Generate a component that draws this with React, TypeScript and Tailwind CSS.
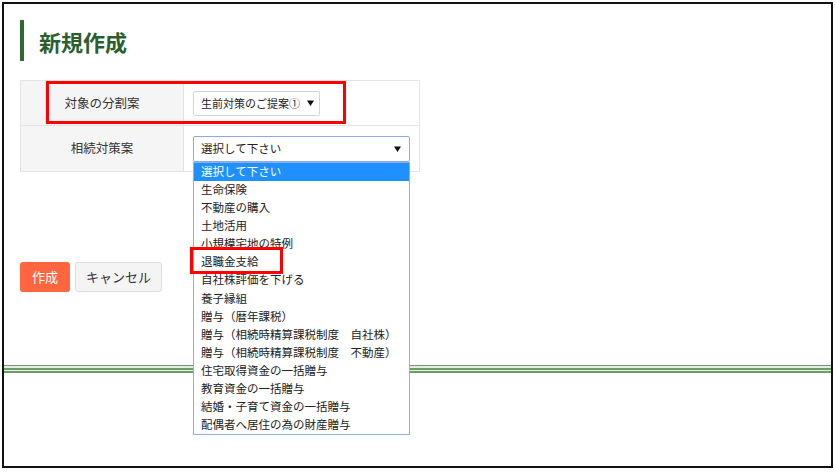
import React from "react";

const options = [
  "選択して下さい",
  "生命保険",
  "不動産の購入",
  "土地活用",
  "小規模宅地の特例",
  "退職金支給",
  "自社株評価を下げる",
  "養子縁組",
  "贈与（暦年課税）",
  "贈与（相続時精算課税制度　自社株）",
  "贈与（相続時精算課税制度　不動産）",
  "住宅取得資金の一括贈与",
  "教育資金の一括贈与",
  "結婚・子育て資金の一括贈与",
  "配偶者へ居住の為の財産贈与",
];

function Arrow() {
  return (
    <svg width="7" height="6" viewBox="0 0 7 6" className="shrink-0">
      <path d="M0 0.5 L7 0.5 L3.5 6 Z" fill="#111" />
    </svg>
  );
}

export default function App() {
  return (
    <div
      className="relative w-[836px] h-[472px] bg-white pt-[2px] pl-[2px] text-[#333]"
      style={{ fontFamily: '"Noto Sans CJK JP", "Noto Sans", sans-serif' }}
    >
      <div className="w-[831px] h-[466px] border-2 border-[#111] flex flex-col">
        <div className="pl-[16px] pt-[16px] flex flex-col">
          <div className="h-[41px] border-l-4 border-[#2e6b33] pl-[15px] flex items-center text-[22px] font-bold text-[#2c5e2e] leading-none">
            新規作成
          </div>

          <div className="mt-[19px] w-[400px] border border-[#e4e4e4] flex flex-col text-[12.5px]">
            <div className="h-[45px] flex border-b border-[#e4e4e4]">
              <div className="w-[163px] bg-[#f5f5f5] border-r border-[#e4e4e4] flex items-center justify-center">
                対象の分割案
              </div>
              <div className="flex items-center pl-[9px]">
                <div className="w-[127px] h-[25px] border border-[#d6d6d6] rounded-[2px] bg-white flex items-center justify-between pl-[7px] pr-[5px] text-[11px] text-[#222]">
                  <span>生前対策のご提案①</span>
                  <Arrow />
                </div>
              </div>
            </div>
            <div className="h-[45px] flex">
              <div className="w-[163px] bg-[#f5f5f5] border-r border-[#e4e4e4] flex items-center justify-center">
                相続対策案
              </div>
              <div className="flex items-center pl-[9px]">
                <div className="relative w-[217px] h-[26px] border border-[#86abe8] rounded-[2px] bg-white flex items-center justify-between pl-[7px] pr-[8px] text-[11.5px] text-[#222]">
                  <span>選択して下さい</span>
                  <Arrow />
                  <div className="absolute z-10 left-[-1px] top-[25px] w-[217px] border border-[#8eaee6] bg-white flex flex-col">
                    {options.map((o, i) => (
                      <div
                        key={o}
                        className={
                          i === 0
                            ? "h-[18.1px] pl-[7px] flex items-center bg-[#1e90ff] text-white whitespace-nowrap"
                            : "h-[18.1px] pl-[7px] flex items-center text-[#222] whitespace-nowrap"
                        }
                      >
                        {o}
                      </div>
                    ))}
                  </div>
                </div>
              </div>
            </div>
          </div>

          <div className="mt-[90px] flex gap-[5px] text-[13px]">
            <div className="w-[50px] h-[30px] rounded-[3px] bg-[#ff653e] text-white flex items-center justify-center">
              作成
            </div>
            <div className="w-[87px] h-[30px] rounded-[3px] bg-[#f4f4f4] border border-[#dcdcdc] text-[#333] flex items-center justify-center">
              キャンセル
            </div>
          </div>
        </div>

        <div className="mt-[73px] flex flex-col">
          <div className="h-[1px] bg-[#6f9b6c]" />
          <div className="h-[2px] bg-[#e3ede2]" />
          <div className="h-[1.5px] bg-[#6f9b6c]" />
          <div className="h-[1.5px] bg-[#e3ede2]" />
          <div className="h-[1.5px] bg-[#6f9b6c]" />
        </div>
      </div>

      <div className="absolute left-[46px] top-[81px] w-[300px] h-[43px] border-[3px] border-[#ff0000] pointer-events-none" />
      <div className="absolute z-20 left-[190px] top-[247px] w-[93px] h-[27px] border-[3px] border-[#ff0000] pointer-events-none" />
    </div>
  );
}
